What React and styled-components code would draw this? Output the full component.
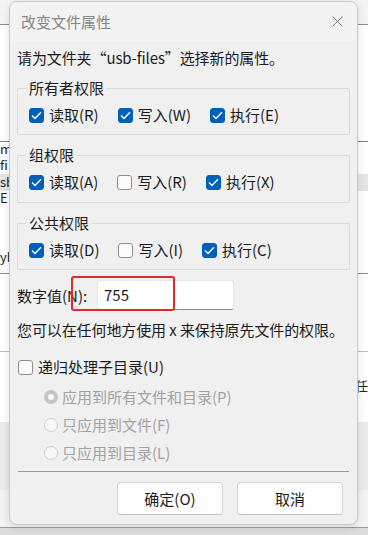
import React from 'react'
import styled, { createGlobalStyle } from 'styled-components'

const Global = createGlobalStyle`
  html, body { margin: 0; padding: 0; }
  body {
    width: 368px;
    height: 535px;
    overflow: hidden;
    background: #ffffff;
    font-family: "Segoe UI", "Noto Sans CJK SC", sans-serif;
  }
`

const Screen = styled.div`
  position: relative;
  width: 368px;
  height: 535px;
  overflow: hidden;
  display: flex;
  flex-direction: column;
  font-size: 15px;
  color: #1b1b1b;
`

const Band = styled.div`
  height: ${p => p.h}px;
  flex: none;
  box-sizing: border-box;
  overflow: hidden;
  background: ${p => p.bg || '#ffffff'};
  border-bottom: ${p => (p.line ? `1px solid ${p.line}` : 'none')};
  display: flex;
  align-items: center;
  justify-content: space-between;
  font-size: 13px;
  line-height: ${p => p.h - 2}px;
  color: #222;
  white-space: nowrap;
`

const Frag = styled.span`
  display: block;
  height: 100%;
`

const Dialog = styled.div`
  position: absolute;
  left: 9px;
  top: 1px;
  width: 347px;
  height: 522px;
  background: #f0f0f0;
  border: 1px solid #c9c9c9;
  border-radius: 8px;
  box-shadow: 0 2px 8px rgba(0, 0, 0, 0.12);
  overflow: hidden;
  display: flex;
  flex-direction: column;
`

const TitleBar = styled.div`
  height: 39px;
  flex: none;
  background: #f3f3f3;
  display: flex;
  align-items: center;
  justify-content: space-between;
  padding: 0 14px 0 11px;
`

const Title = styled.div`
  font-size: 15px;
  color: #858585;
`

const Body = styled.div`
  flex: 1;
  display: flex;
  flex-direction: column;
  padding: 0 7px 0 7px;
`

const Line = styled.div`
  height: 20px;
  line-height: 20px;
  margin-top: ${p => p.mt || 0}px;
  white-space: nowrap;
  letter-spacing: -0.1px;
`

const Group = styled.fieldset`
  margin: ${p => p.mt || 0}px 0 0 0;
  border: 1px solid #dadada;
  border-radius: 2px;
  padding: 7px 12px ${p => p.pb || 9}px 11px;
  min-inline-size: 0;
`

const Legend = styled.legend`
  padding: 0 3px;
  margin-left: -3px;
  height: 20px;
  line-height: 20px;
  font-size: 15px;
`

const CheckRow = styled.div`
  display: flex;
  align-items: center;
  gap: 19px;
  height: 20px;
`

const CheckItem = styled.label`
  display: flex;
  align-items: center;
  gap: 5px;
  height: 20px;
  line-height: 20px;
  white-space: nowrap;
  margin-top: ${p => p.mt || 0}px;
  margin-left: ${p => p.ml || 0}px;
`

const Box = styled.span`
  width: 15px;
  height: 15px;
  box-sizing: border-box;
  border-radius: 3px;
  flex: none;
  display: flex;
  align-items: center;
  justify-content: center;
  background: ${p => (p.on ? '#005fb8' : '#fbfbfb')};
  border: 1px solid ${p => (p.on ? '#005fb8' : '#8f8f8f')};
`

const NumRow = styled.div`
  position: relative;
  display: flex;
  align-items: center;
  gap: 7px;
  height: 30px;
  margin-top: 10px;
`

const NumLabel = styled.span`
  width: 73px;
  white-space: nowrap;
`

const Input = styled.div`
  width: 137px;
  height: 30px;
  box-sizing: border-box;
  background: #ffffff;
  border: 1px solid #e6e6e6;
  border-bottom: 1px solid #8a8a8a;
  border-radius: 3px;
  padding-left: 6px;
  line-height: 28px;
  font-size: 15px;
`

const Highlight = styled.div`
  position: absolute;
  left: 54px;
  top: -4px;
  width: 104px;
  height: 35px;
  box-sizing: border-box;
  border: 2px solid #e5262b;
  border-radius: 3px;
  pointer-events: none;
`

const Radio = styled.span`
  width: 14px;
  height: 14px;
  box-sizing: border-box;
  border-radius: 50%;
  flex: none;
  background: #f7f7f7;
  border: ${p => (p.on ? '4px solid #c5c5c5' : '1px solid #cfcfcf')};
`

const RadioLabel = styled.span`
  color: #a2a2a2;
`

const RadioItem = styled(CheckItem)`
  gap: 4px;
`

const Separator = styled.div`
  height: 1px;
  background: #9c9c9c;
  margin-top: 8px;
  margin-left: 1px;
  margin-right: 1px;
`

const Footer = styled.div`
  display: flex;
  justify-content: flex-end;
  gap: 14px;
  margin-top: 10px;
  padding-right: 7px;
`

const Button = styled.div`
  width: 106px;
  height: 33px;
  box-sizing: border-box;
  background: #fdfdfd;
  border: 1px solid #d6d6d6;
  border-bottom-color: #c2c2c2;
  border-radius: 4px;
  display: flex;
  align-items: center;
  justify-content: center;
  font-size: 15px;
  color: #1b1b1b;
`

const Tick = () => (
  <svg width="11" height="9" viewBox="0 0 11 9">
    <path d="M1 4.6 L4 7.4 L10 1.2" fill="none" stroke="#fff" strokeWidth="1.4" />
  </svg>
)

const Close = () => (
  <svg width="11" height="11" viewBox="0 0 11 11">
    <path d="M0.5 0.5 L10.5 10.5 M10.5 0.5 L0.5 10.5" stroke="#777" strokeWidth="1" />
  </svg>
)

const Check = ({ on, children, ...rest }) => (
  <CheckItem {...rest}>
    <Box on={on}>{on && <Tick />}</Box>
    <span>{children}</span>
  </CheckItem>
)

const Opt = ({ on, children }) => (
  <RadioItem ml={27} mt={on ? 10 : 8}>
    <Radio on={on} />
    <RadioLabel>{children}</RadioLabel>
  </RadioItem>
)

const groups = [
  { name: '所有者权限', items: [['读取(R)', true], ['写入(W)', true], ['执行(E)', true]], pb: 9 },
  { name: '组权限', items: [['读取(A)', true], ['写入(R)', false], ['执行(X)', true]], pb: 10 },
  { name: '公共权限', items: [['读取(D)', true], ['写入(I)', false], ['执行(C)', true]], pb: 9 },
]

export default function App() {
  return (
    <>
      <Global />
      <Screen>
        <Band h={25} bg="#f4f4f4" line="#8d8d8d" />
        <Band h={117} bg="#ffffff" line="#7d7d7d" />
        <Band h={16}><Frag>m</Frag></Band>
        <Band h={16}><Frag>fi</Frag></Band>
        <Band h={17} bg="#e6e6e6"><Frag>sb</Frag></Band>
        <Band h={16}><Frag>E目</Frag></Band>
        <Band h={34} />
        <Band h={33} line="#8d8d8d"><Frag>yb</Frag></Band>
        <Band h={78} line="#bdbdbd" />
        <Band h={70}><Frag /><Frag>任</Frag></Band>
        <Band h={68} bg="#ececec" />
        <Band h={38} bg="#f3f3f3" line="#9a9a9a" />
        <Band h={9} bg="#dcdcdc" />

        <Dialog>
          <TitleBar>
            <Title>改变文件属性</Title>
            <Close />
          </TitleBar>
          <Body>
            <Line mt={7}>请为文件夹“usb-files”选择新的属性。</Line>
            {groups.map(g => (
              <Group key={g.name} mt={10} pb={g.pb}>
                <Legend>{g.name}</Legend>
                <CheckRow>
                  {g.items.map(([label, on]) => (
                    <Check key={label} on={on}>{label}</Check>
                  ))}
                </CheckRow>
              </Group>
            ))}
            <NumRow>
              <NumLabel>数字值(N):</NumLabel>
              <Input>755</Input>
              <Highlight />
            </NumRow>
            <Line mt={10}>您可以在任何地方使用 x 来保持原先文件的权限。</Line>
            <Check mt={17} ml={1} on={false}>递归处理子目录(U)</Check>
            <Opt on>应用到所有文件和目录(P)</Opt>
            <Opt>只应用到文件(F)</Opt>
            <Opt>只应用到目录(L)</Opt>
            <Separator />
            <Footer>
              <Button>确定(O)</Button>
              <Button>取消</Button>
            </Footer>
          </Body>
        </Dialog>
      </Screen>
    </>
  )
}
